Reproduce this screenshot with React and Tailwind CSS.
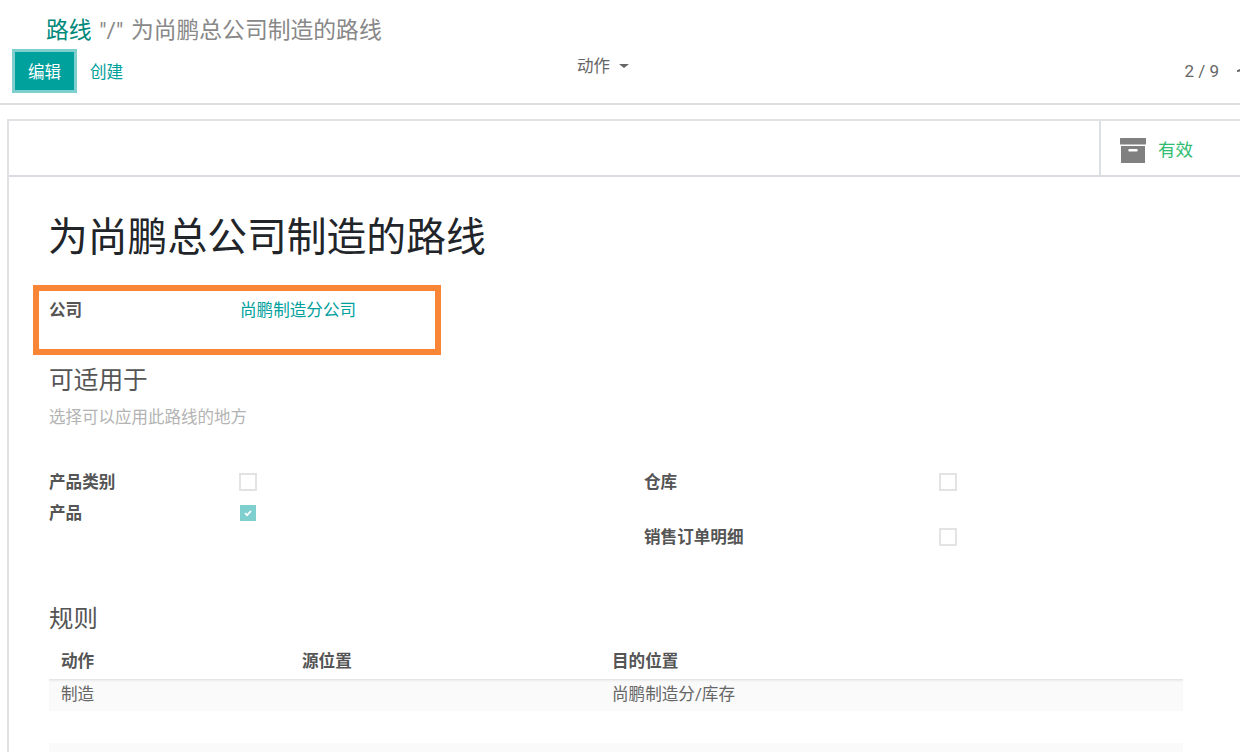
export default function App() {
  return (
    <div className="w-[1240px] h-[752px] overflow-hidden bg-white font-['Roboto','Noto_Sans_CJK_SC',sans-serif] text-[16.6px] text-[#666]">
      {/* control panel */}
      <div className="h-[105px] border-b-2 border-[#dfdfdf] pl-[12px] flex flex-col">
        <div className="pl-[34px] pt-[15px] h-[50px] leading-[32px] text-[22.8px] text-[#888] whitespace-nowrap [word-spacing:2px]">
          <span className="text-[#00897b]">路线</span> "/" 为尚鹏总公司制造的路线
        </div>
        <div className="flex h-[42px]">
          <div className="w-[400px] flex items-center">
            <button className="w-[65px] h-[44px] pt-[4px] bg-[#00a09d] border-[3px] border-[#7fcfce] text-white text-[16.5px]">编辑</button>
            <span className="ml-[13px] pt-[4px] text-[#00a09d]">创建</span>
          </div>
          <div className="ml-[165px] flex items-center h-[30px] mt-[2px] text-[16.5px] text-[#666]">
            动作
            <span className="ml-[9px] mb-[2px] w-0 h-0 border-x-[5px] border-x-transparent border-t-[4.5px] border-t-[#666]"></span>
          </div>
          <div className="ml-auto pt-[9px] text-[17px] text-[#666] flex items-start">
            <span>2 / 9</span>
            <svg width="3" height="4" viewBox="0 0 3 4" className="ml-[18px] mt-[10px]" fill="#666"><path d="M0 1.2L3 0v2.4L0 3z" /></svg>
          </div>
        </div>
      </div>

      {/* sheet */}
      <div className="ml-[7px] mt-[14px] border-l-2 border-t-2 border-[#e0e2e6]">
        <div className="h-[56px] border-b-2 border-[#d9dce0] flex justify-end">
          <div className="w-[141px] border-l-2 border-[#dcdfe3] flex items-center pl-[19px] pt-[4px]">
            <svg width="26" height="26" viewBox="0 0 26 26" className="text-[#808080] mt-[2px]" fill="currentColor">
              <rect x="0" y="0" width="26" height="6.5" rx="0.5" />
              <path d="M1 8h24v17H1zM9.5 11a0.8 0.8 0 0 0 0 2.5h7a0.8 0.8 0 0 0 0-2.5z" fillRule="evenodd" />
            </svg>
            <span className="ml-[12px] text-[17.5px] text-[#2ebc6e]">有效</span>
          </div>
        </div>

        <div className="pl-[40px]">
          <h1 className="pt-[34px] h-[108px] -ml-[1px] text-[39.8px] leading-[54px] text-[#212529] whitespace-nowrap">为尚鹏总公司制造的路线</h1>

          <div className="-ml-[16px] w-[408px] h-[70px] border-[6px] border-[#f98536] flex pl-[10px] pt-[8px]">
            <span className="w-[191px] font-bold leading-[24px] text-[#555]">公司</span>
            <span className="text-[#00a09d] leading-[24px]">尚鹏制造分公司</span>
          </div>

          <div className="mt-[9px] text-[24.7px] leading-[34px] text-[#555]">可适用于</div>
          <div className="mt-[8px] text-[16.5px] leading-[24px] text-[#b3b3b3]">选择可以应用此路线的地方</div>

          <div className="mt-[41px] flex">
            <div className="w-[595px] flex flex-col">
              <div className="flex items-center h-[24px]">
                <span className="w-[190px] font-bold text-[#555]">产品类别</span>
                <span className="w-[18px] h-[18px] mb-[2px] border-2 border-[#e3e3e3] bg-white"></span>
              </div>
              <div className="flex items-center h-[24px] mt-[7px]">
                <span className="w-[190px] font-bold text-[#555]">产品</span>
                <span className="w-[16px] h-[16px] mb-[2px] ml-[1px] bg-[#7fcfce] flex items-center justify-center">
                  <svg width="10" height="10" viewBox="0 0 10 10" fill="none" stroke="#fff" strokeWidth="1.8"><path d="M2 5.2l2.1 2L8 3" /></svg>
                </span>
              </div>
            </div>
            <div className="flex flex-col">
              <div className="flex items-center h-[24px]">
                <span className="w-[295px] font-bold text-[#555]">仓库</span>
                <span className="w-[18px] h-[18px] mb-[2px] border-2 border-[#e3e3e3] bg-white"></span>
              </div>
              <div className="flex items-center h-[24px] mt-[31px]">
                <span className="w-[295px] font-bold text-[#555]">销售订单明细</span>
                <span className="w-[18px] h-[18px] mb-[2px] border-2 border-[#e3e3e3] bg-white"></span>
              </div>
            </div>
          </div>

          <div className="mt-[52px] text-[24.4px] leading-[34px] text-[#555]">规则</div>

          <div className="w-[1134px] mt-[9px]">
            <div className="flex h-[34px] items-center font-bold text-[#555]">
              <span className="w-[253px] pl-[12px]">动作</span>
              <span className="w-[310px]">源位置</span>
              <span>目的位置</span>
            </div>
            <div className="flex h-[32px] items-center bg-[#fafafa] shadow-[inset_0_3px_3px_-2px_rgba(0,0,0,0.12)]">
              <span className="w-[253px] pl-[12px]">制造</span>
              <span className="w-[310px]"></span>
              <span>尚鹏制造分/库存</span>
            </div>
            <div className="h-[32px] bg-white"></div>
            <div className="h-[32px] bg-[#fafafa]"></div>
          </div>
        </div>
      </div>
    </div>
  );
}
